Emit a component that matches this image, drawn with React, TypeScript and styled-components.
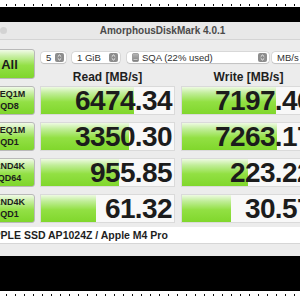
import React from "react";
import styled, { createGlobalStyle } from "styled-components";

const Global = createGlobalStyle`
  html, body { margin: 0; padding: 0; background: #fff; overflow: hidden; }
  body { font-family: "Liberation Sans", Arial, sans-serif; }
  #root { width: 300px; height: 300px; overflow: hidden; }
`;

const Page = styled.div`
  width: 300px;
  height: 300px;
  overflow: hidden;
  display: flex;
  flex-direction: column;
  background: #fff;
`;

const DotStrip = styled.div<{ $h: number; $y: number }>`
  flex: none;
  height: ${(p) => p.$h}px;
  background-color: #fff;
  background-image: radial-gradient(circle, #111 0.7px, transparent 1px);
  background-size: 9px 2px;
  background-position: 2px ${(p) => p.$y}px;
  background-repeat: repeat-x;
`;

const BlackBand = styled.div<{ $h: number }>`
  flex: none;
  height: ${(p) => p.$h}px;
  background: #000;
`;

const Window = styled.div`
  flex: none;
  margin-left: -16px;
  width: 340px;
  background: #ececec;
  display: flex;
  flex-direction: column;
`;

const TitleBar = styled.div`
  height: 17px;
  background: #e8e8e8;
  border-bottom: 1px solid #d4d4d4;
  display: grid;
  grid-template-columns: 1fr auto 1fr;
  align-items: center;
`;

const Light = styled.span`
  width: 7px;
  height: 7px;
  border-radius: 50%;
  background: #d3d3d3;
  margin-left: 16px;
`;

const Title = styled.span`
  font-size: 10px;
  font-weight: 600;
  color: #4a4a4a;
  margin-left: 17px;
`;

const Body = styled.div`
  padding-top: 9px;
  display: grid;
  grid-template-columns: 51px 135px 135px;
  grid-auto-rows: 29px;
  grid-template-rows: 30px;
  column-gap: 5px;
  row-gap: 7px;
`;

const GreenButton = styled.div<{ $big?: boolean }>`
  box-sizing: border-box;
  border: 1px solid #b9b9b9;
  border-radius: 3px;
  background: linear-gradient(#f1fbe7 0%, #c8efa4 22%, #93e046 55%, #7fd62c 100%);
  display: flex;
  align-items: center;
  justify-content: center;
  text-align: center;
  color: #1c1c1c;
  font-weight: bold;
  font-size: ${(p) => (p.$big ? 13 : 9)}px;
  line-height: ${(p) => (p.$big ? 1 : 1.3)};
  white-space: pre-line;
`;

const Controls = styled.div`
  grid-column: 2 / span 2;
  display: flex;
  flex-direction: column;
`;

const SelectRow = styled.div`
  margin-top: 3px;
  height: 11px;
  display: flex;
  align-items: center;
`;

const Select = styled.div<{ $w: number; $ml: number }>`
  box-sizing: border-box;
  flex: none;
  width: ${(p) => p.$w}px;
  margin-left: ${(p) => p.$ml}px;
  height: 11px;
  background: #fff;
  border-radius: 3px;
  box-shadow: 0 0 0 0.5px rgba(0, 0, 0, 0.14), 0 0.5px 1px rgba(0, 0, 0, 0.12);
  display: flex;
  align-items: center;
  padding: 0 2px 0 5px;
  font-size: 9.5px;
  color: #303030;
`;

const SelectText = styled.span`
  flex: 1;
  white-space: nowrap;
  overflow: hidden;
  display: flex;
  align-items: center;
  gap: 3px;
`;

const Headers = styled.div`
  margin-top: 8px;
  display: grid;
  grid-template-columns: 135px 135px;
  column-gap: 6px;
`;

const Header = styled.div`
  text-align: center;
  font-size: 12px;
  font-weight: bold;
  color: #1e1e1e;
  line-height: 1;
`;

const Cell = styled.div`
  position: relative;
  box-sizing: border-box;
  border: 1px solid #dadada;
  background: #f8f8f8;
  overflow: hidden;
  display: flex;
  align-items: center;
  justify-content: flex-end;
`;

const WriteCell = styled(Cell)`
  margin-left: 1px;
`;

const Bar = styled.div`
  position: absolute;
  left: 0;
  top: 0;
  bottom: 0;
  background: linear-gradient(#eefae2 0%, #c2ee9b 22%, #92e043 55%, #80d72c 100%);
`;

const Value = styled.span`
  position: relative;
  font-size: 28px;
  font-weight: bold;
  color: #1c1c1c;
  letter-spacing: -0.6px;
  padding-right: 2px;
  line-height: 1;
`;

const Device = styled.div`
  margin-top: 4px;
  height: 16px;
  background: #fff;
  display: flex;
  align-items: center;
  padding-left: 2px;
  font-size: 10.5px;
  font-weight: bold;
  color: #1e1e1e;
`;

const Footer = styled.div`
  height: 12px;
  border-top: 1px solid #d6d6d6;
  background: #ececec;
`;

const Stepper = () => (
  <svg width="9" height="9" viewBox="0 0 9 9">
    <rect x="0" y="0" width="9" height="9" rx="2" fill="#8d8d8d" />
    <path d="M2.8 3.6 L4.5 2 L6.2 3.6" stroke="#fff" strokeWidth="0.9" fill="none" />
    <path d="M2.8 5.4 L4.5 7 L6.2 5.4" stroke="#fff" strokeWidth="0.9" fill="none" />
  </svg>
);

const Drive = () => (
  <svg width="7" height="9" viewBox="0 0 7 9">
    <defs>
      <linearGradient id="dg" x1="0" y1="0" x2="0" y2="1">
        <stop offset="0" stopColor="#b8b8b8" />
        <stop offset="1" stopColor="#7d7d7d" />
      </linearGradient>
    </defs>
    <rect x="0.5" y="0.5" width="6" height="8" rx="1" fill="url(#dg)" stroke="#6a6a6a" strokeWidth="0.5" />
    <line x1="1.5" y1="6.5" x2="5.5" y2="6.5" stroke="#eee" strokeWidth="0.6" />
  </svg>
);

type Row = { label: string; read: string; write: string; rw: number; ww: number };

const rows: Row[] = [
  { label: "SEQ1M\nQD8", read: "6474.34", write: "7197.46", rw: 93, ww: 94 },
  { label: "SEQ1M\nQD1", read: "3350.30", write: "7263.17", rw: 88, ww: 95 },
  { label: "RND4K\nQD64", read: "955.85", write: "223.22", rw: 78, ww: 66 },
  { label: "RND4K\nQD1", read: "61.32", write: "30.57", rw: 55, ww: 49 },
];

export default function App() {
  return (
    <>
      <Global />
      <Page>
        <DotStrip $h={7} $y={4} />
        <BlackBand $h={15} />
        <Window>
          <TitleBar>
            <Light />
            <Title>AmorphousDiskMark 4.0.1</Title>
            <span />
          </TitleBar>
          <Body>
            <GreenButton $big>All</GreenButton>
            <Controls>
              <SelectRow>
                <Select $w={25} $ml={1}>
                  <SelectText>5</SelectText>
                  <Stepper />
                </Select>
                <Select $w={48} $ml={6}>
                  <SelectText>1 GiB</SelectText>
                  <Stepper />
                </Select>
                <Select $w={142} $ml={7}>
                  <SelectText>
                    <Drive />
                    SQA (22% used)
                  </SelectText>
                  <Stepper />
                </Select>
                <Select $w={62} $ml={3}>
                  <SelectText>MB/s</SelectText>
                  <Stepper />
                </Select>
              </SelectRow>
              <Headers>
                <Header>Read [MB/s]</Header>
                <Header>Write [MB/s]</Header>
              </Headers>
            </Controls>
            {rows.map((r) => (
              <React.Fragment key={r.label}>
                <GreenButton>{r.label}</GreenButton>
                <Cell>
                  <Bar style={{ width: r.rw }} />
                  <Value>{r.read}</Value>
                </Cell>
                <WriteCell>
                  <Bar style={{ width: r.ww }} />
                  <Value>{r.write}</Value>
                </WriteCell>
              </React.Fragment>
            ))}
          </Body>
          <Device>APPLE SSD AP1024Z / Apple M4 Pro</Device>
          <Footer />
        </Window>
        <BlackBand $h={35} />
        <DotStrip $h={9} $y={3} />
      </Page>
    </>
  );
}
